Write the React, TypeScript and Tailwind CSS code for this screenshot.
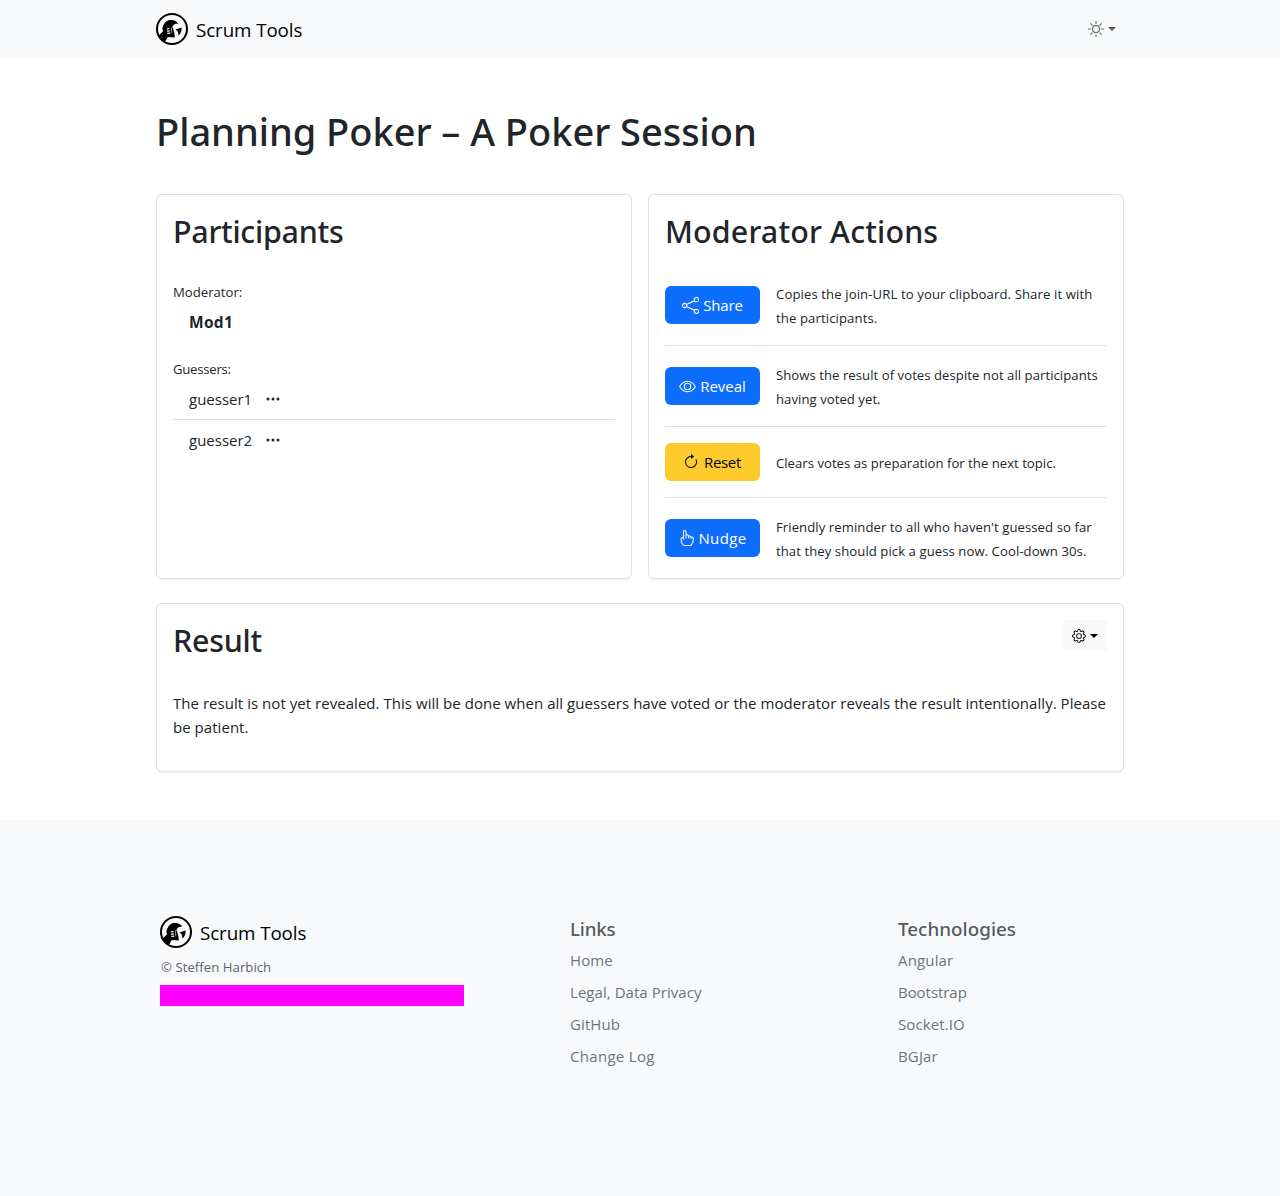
import React from "react";
import { BsShare, BsEye, BsArrowClockwise, BsHandIndex, BsGear, BsSun, BsThreeDots } from "react-icons/bs";

function Logo() {
  return (
    <svg viewBox="0 0 32 32" className="size-8 shrink-0">
      <circle cx="16" cy="16" r="15" fill="none" stroke="#000" strokeWidth="2" />
      <path
        d="M2.6 22.4 L7 18.6 L6.4 15.8 C7 12 9.5 7.4 14 7 C17.5 6.6 20.6 7.8 22.3 10.8 C19.6 10.6 17.6 11.2 16.9 12.8 L16.4 14.8 L17.2 16 L18.4 20.6 L18.8 24.4 L11.8 24 L8.8 29.2 C5.6 27.6 3.6 25.2 2.6 22.4 Z"
        fill="#000"
      />
      <path d="M19.6 16.6 L25.6 14.6 C25.8 18 24.6 20.6 22.6 22.6 L21.8 18.6 Z" fill="#000" />
      <path d="M10.8 16 L13.4 15.4 M11 18.2 L13.8 17.8 M11.2 20.4 L14.2 20.2" stroke="#fff" strokeWidth="1.2" />
      <path d="M15.4 14.6 L15.8 20.4" stroke="#f8f9fa" strokeWidth="0.6" />
    </svg>
  );
}

function Brand() {
  return (
    <a className="flex items-center gap-2 text-black">
      <Logo />
      <span className="text-[18.8px] leading-[30px] tracking-[-0.1px] pt-px">Scrum Tools</span>
    </a>
  );
}

function Heading({ children, className }: { children: React.ReactNode; className: string }) {
  return (
    <h2 className={`font-['Noto_Sans',sans-serif] text-[30.4px] font-medium leading-[38px] pt-[2px] ${className}`}>
      {children}
    </h2>
  );
}

const actions = [
  { label: "Share", Icon: BsShare, icon: "size-[17px]", warn: false, track: "tracking-[-0.2px]", body: "tracking-[0.1px]", text: "Copies the join-URL to your clipboard. Share it with the participants." },
  { label: "Reveal", Icon: BsEye, icon: "size-[17px]", warn: false, track: "tracking-[-0.05px]", body: "tracking-[0.04px]", text: "Shows the result of votes despite not all participants having voted yet." },
  { label: "Reset", Icon: BsArrowClockwise, icon: "size-4 -translate-x-px", warn: true, track: "tracking-[-0.3px]", body: "tracking-[0.01px]", text: "Clears votes as preparation for the next topic." },
  { label: "Nudge", Icon: BsHandIndex, icon: "size-4", warn: false, track: "tracking-[0.4px]", body: "tracking-[0.06px]", text: "Friendly reminder to all who haven't guessed so far that they should pick a guess now. Cool-down 30s." },
];

const columns = [
  {
    title: "Links",
    track: "tracking-[-0.2px]",
    links: [
      ["Home", "tracking-[0.1px]"],
      ["Legal, Data Privacy", "tracking-[0.05px]"],
      ["GitHub", "tracking-[0.1px]"],
      ["Change Log", "tracking-[0.3px]"],
    ],
  },
  {
    title: "Technologies",
    track: "tracking-[0.05px]",
    links: [
      ["Angular", "tracking-[0.15px]"],
      ["Bootstrap", "tracking-[-0.05px]"],
      ["Socket.IO", "tracking-[0.1px]"],
      ["BGJar", "tracking-[0.15px]"],
    ],
  },
];

const card = "rounded-md border border-[#dfe0e1] bg-white p-4 shadow-[0_1px_2px_rgba(0,0,0,0.06)]";

export default function App() {
  return (
    <div className="flex min-h-[1196px] flex-col bg-white font-['Open_Sans',sans-serif] text-[15px] leading-6 text-[#212529]">
      <nav className="h-[58px] bg-[#f8f9fa]">
        <div className="mx-auto flex h-full w-[968px] items-center justify-between">
          <Brand />
          <button className="flex items-center gap-1 pr-2 text-black/65">
            <BsSun className="size-4" />
            <span className="border-x-[4px] border-t-[4px] border-x-transparent border-t-black/65" />
          </button>
        </div>
      </nav>

      <main className="mx-auto w-[968px] pt-[49px]">
        <h1 className="font-['Noto_Sans',sans-serif] text-[38px] font-medium leading-[48px] tracking-[-0.03px]">
          Planning Poker – A Poker Session
        </h1>

        <div className="mt-[39px] grid grid-cols-2 gap-4">
          <section className={card}>
            <Heading className="tracking-[-0.25px]">Participants</Heading>
            <div className="mt-[29px] text-[13.15px]">Moderator:</div>
            <div className="mt-1.5 pl-4 text-[15.5px] font-bold tracking-[0.3px]">Mod1</div>
            <div className="mt-[23px] text-[13.15px] tracking-[-0.25px]">Guessers:</div>
            <ul>
              <li className="flex h-[39px] items-center gap-[13px] border-b border-[#dee2e6] pb-[3px] pl-4">
                guesser1 <BsThreeDots className="size-4" />
              </li>
              <li className="flex h-[41px] items-center gap-[13px] pb-0.5 pl-4">
                guesser2 <BsThreeDots className="size-4" />
              </li>
            </ul>
          </section>

          <section className={card}>
            <Heading className="tracking-[0.17px]">Moderator Actions</Heading>
            <ul className="mt-3.5 divide-y divide-[#dee2e6]">
              {actions.map(({ label, Icon, icon, warn, track, body, text }) => (
                <li key={label} className="flex items-center gap-4 py-4 last:pb-0">
                  <button
                    className={`flex h-[38px] w-[95px] shrink-0 items-center justify-center gap-1 rounded-md ${
                      warn ? "bg-[#ffca2c] text-black" : "bg-[#0d6efd] text-white"
                    }`}
                  >
                    <Icon className={icon} />
                    <span className={track}>{label}</span>
                  </button>
                  <p className={`-mb-px pt-px text-[13.15px] ${body}`}>{text}</p>
                </li>
              ))}
            </ul>
          </section>
        </div>

        <section className={`mt-6 h-[169px] ${card}`}>
          <div className="flex items-start justify-between">
            <Heading className="tracking-[-0.25px]">Result</Heading>
            <button className="flex h-[31px] w-11 items-center justify-center gap-1 rounded bg-[#f8f9fa] text-black">
              <BsGear className="size-3.5" />
              <span className="border-x-[4px] border-t-[4px] border-x-transparent border-t-black" />
            </button>
          </div>
          <p className="mt-[31px] tracking-[0.04px]">
            The result is not yet revealed. This will be done when all guessers have voted or the moderator reveals the
            result intentionally. Please be patient.
          </p>
        </section>
      </main>

      <footer className="mt-12 grow bg-[#f8f9fa] pt-24 text-[#6c757d]">
        <div className="mx-auto grid w-[960px] grid-cols-[410px_328px_222px]">
          <div>
            <Brand />
            <p className="mt-[7px] pl-px text-[13.15px] tracking-[0.05px] text-[#5f6469]">© Steffen Harbich</p>
            <div className="mt-1.5 h-[21px] w-[304px] bg-[#ff00ff]" />
          </div>
          {columns.map(({ title, track, links }) => (
            <div key={title}>
              <h5 className={`pt-px font-['Noto_Sans',sans-serif] text-[18.8px] font-medium leading-6 text-[#565b60] ${track}`}>
                {title}
              </h5>
              <ul className="mt-[7px] flex flex-col gap-2">
                {links.map(([name, spacing]) => (
                  <li key={name} className={spacing}>
                    {name}
                  </li>
                ))}
              </ul>
            </div>
          ))}
        </div>
      </footer>
    </div>
  );
}
